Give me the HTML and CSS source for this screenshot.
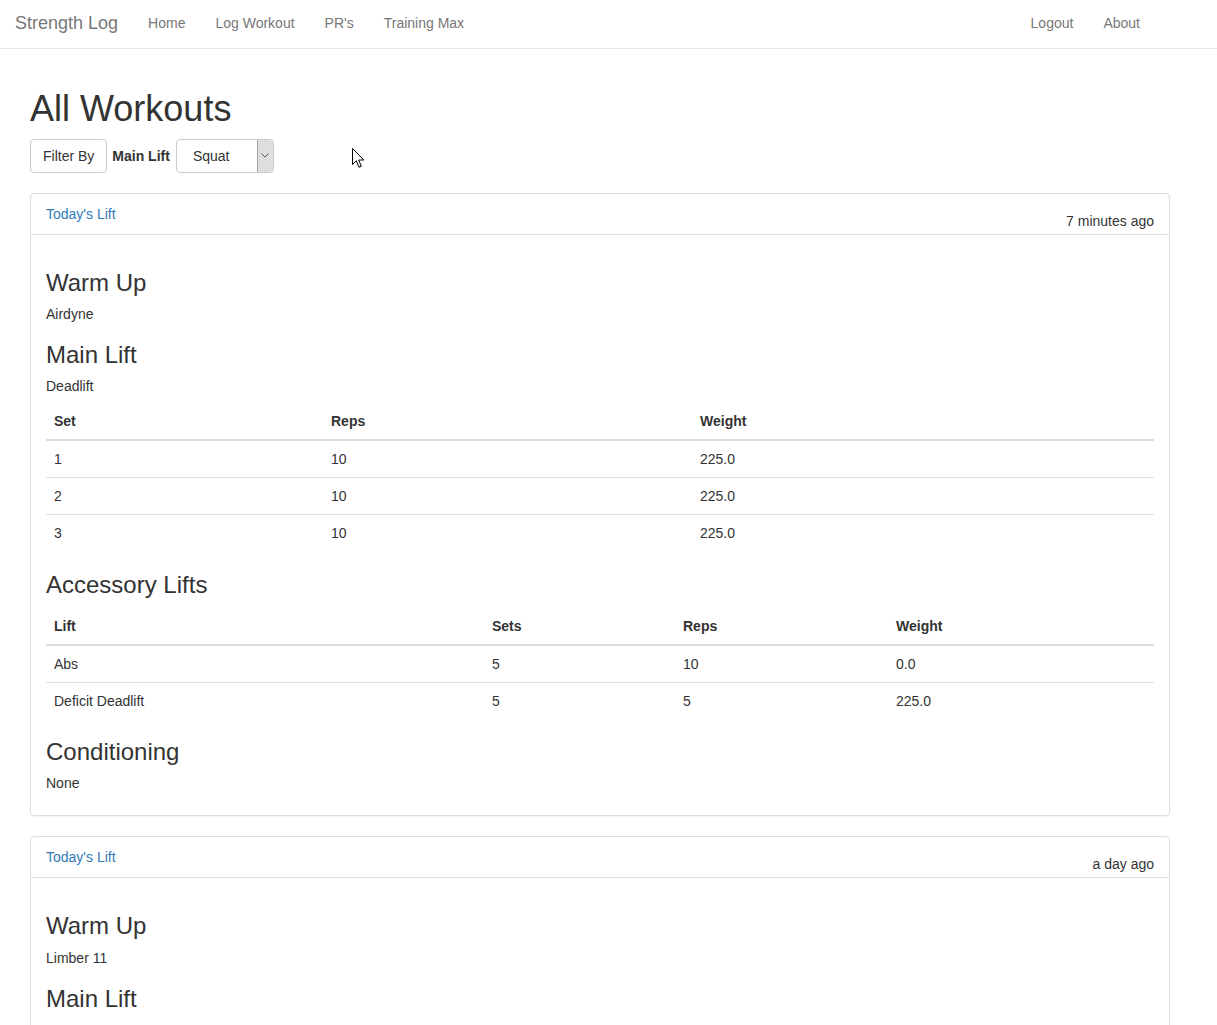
FILE: index.html
```html
<!DOCTYPE html>
<html lang="en">
<head>
<meta charset="utf-8">
<title>Strength Log</title>
<link rel="stylesheet" href="styles.css">
</head>
<body>
<nav class="navbar">
  <div class="navbar-inner">
    <a class="brand" href="#">Strength Log</a>
    <ul class="nav">
      <li><a href="#">Home</a></li>
      <li><a href="#">Log Workout</a></li>
      <li><a href="#">PR's</a></li>
      <li><a href="#">Training Max</a></li>
    </ul>
    <ul class="nav nav-right">
      <li><a href="#">Logout</a></li>
      <li><a href="#">About</a></li>
    </ul>
  </div>
</nav>

<main class="container">
  <h1 class="page-title">All Workouts</h1>
  <div class="filter-row">
    <button class="btn" type="button">Filter By</button>
    <span class="filter-label">Main Lift</span>
    <div class="select">
      <span class="select-value">Squat</span>
      <span class="select-arrow">
        <svg width="8" height="5" viewBox="0 0 8 5"><path d="M0.5 0.5 L4 4 L7.5 0.5" fill="none" stroke="#555" stroke-width="1"/></svg>
      </span>
    </div>
  </div>

  <section class="panel">
    <div class="panel-heading">
      <span class="panel-title"><a href="#">Today's Lift</a></span>
      <span class="panel-time">7 minutes ago</span>
    </div>
    <div class="panel-body">
      <h3 class="section-title">Warm Up</h3>
      <p class="section-text">Airdyne</p>
      <h3 class="section-title">Main Lift</h3>
      <p class="section-text">Deadlift</p>
      <table class="table table-sets">
        <colgroup><col class="w277"><col class="w369"><col></colgroup>
        <thead><tr><th>Set</th><th>Reps</th><th>Weight</th></tr></thead>
        <tbody>
          <tr><td>1</td><td>10</td><td>225.0</td></tr>
          <tr><td>2</td><td>10</td><td>225.0</td></tr>
          <tr><td>3</td><td>10</td><td>225.0</td></tr>
        </tbody>
      </table>
      <h3 class="section-title">Accessory Lifts</h3>
      <table class="table table-spaced">
        <colgroup><col class="w438"><col class="w191"><col class="w213"><col></colgroup>
        <thead><tr><th>Lift</th><th>Sets</th><th>Reps</th><th>Weight</th></tr></thead>
        <tbody>
          <tr><td>Abs</td><td>5</td><td>10</td><td>0.0</td></tr>
          <tr><td>Deficit Deadlift</td><td>5</td><td>5</td><td>225.0</td></tr>
        </tbody>
      </table>
      <h3 class="section-title">Conditioning</h3>
      <p class="section-text">None</p>
    </div>
  </section>

  <section class="panel">
    <div class="panel-heading">
      <span class="panel-title"><a href="#">Today's Lift</a></span>
      <span class="panel-time">a day ago</span>
    </div>
    <div class="panel-body">
      <h3 class="section-title">Warm Up</h3>
      <p class="section-text">Limber 11</p>
      <h3 class="section-title">Main Lift</h3>
      <p class="section-text">Squat</p>
      <table class="table table-sets">
        <colgroup><col class="w277"><col class="w369"><col></colgroup>
        <thead><tr><th>Set</th><th>Reps</th><th>Weight</th></tr></thead>
        <tbody>
          <tr><td>1</td><td>5</td><td>275.0</td></tr>
          <tr><td>2</td><td>5</td><td>275.0</td></tr>
          <tr><td>3</td><td>5</td><td>275.0</td></tr>
        </tbody>
      </table>
      <h3 class="section-title">Conditioning</h3>
      <p class="section-text">None</p>
    </div>
  </section>
</main>

<svg class="cursor" width="13" height="21" viewBox="0 0 13 21">
  <path d="M0.5 0.5 L0.5 16.5 L4.3 12.8 L7 19.3 L9.3 18.3 L6.7 12 L11.8 12 Z" fill="#fff" stroke="#000" stroke-width="1" stroke-linejoin="miter"/>
</svg>
</body>
</html>
```

FILE: styles.css
```css
* { box-sizing: border-box; }

body {
  margin: 0;
  font-family: "Liberation Sans", Arial, Helvetica, sans-serif;
  font-size: 14px;
  line-height: 20px;
  color: #333;
  background: #fff;
}

a { text-decoration: none; }

/* Navbar */
.navbar {
  background: #fff;
  border-bottom: 1px solid #e7e7e7;
  margin-bottom: 20px;
}
.navbar-inner {
  display: flex;
  align-items: flex-start;
  height: 48px;
  padding-right: 62px;
}
.brand {
  display: block;
  padding: 13px 15px 15px;
  font-size: 18px;
  line-height: 20px;
  color: #777;
}
.nav {
  display: flex;
  list-style: none;
  margin: 0;
  padding: 0;
}
.nav a {
  display: block;
  padding: 13px 15px 15px;
  color: #777;
}
.nav-right { margin-left: auto; }

/* Content */
.container {
  display: flow-root;
  width: 1140px;
  margin-left: 30px;
}
.page-title {
  font-size: 36px;
  line-height: 39.6px;
  font-weight: 500;
  margin: 20px 0 10px;
}

.filter-row {
  display: flex;
  align-items: center;
  gap: 5px;
  height: 34px;
  margin-bottom: 20px;
}
.btn {
  height: 34px;
  padding: 6px 12px;
  border: 1px solid #ccc;
  border-radius: 4px;
  background: #fff;
  color: #333;
  font: inherit;
  line-height: 20px;
}
.filter-label {
  font-weight: bold;
  padding-right: 1px;
}
.select {
  display: flex;
  width: 98px;
  height: 34px;
  border: 1px solid #ccc;
  border-radius: 4px;
  background: #fff;
}
.select-value {
  flex: 1;
  padding-left: 16px;
  line-height: 32px;
}
.select-arrow {
  width: 16px;
  display: flex;
  align-items: center;
  justify-content: center;
  background: #dedede;
  border-left: 1px solid #a6a6a6;
  border-radius: 0 3px 3px 0;
}

/* Panels */
.panel {
  border: 1px solid #ddd;
  border-radius: 4px;
  background: #fff;
  margin-bottom: 20px;
  box-shadow: 0 1px 1px rgba(0, 0, 0, 0.05);
}
.panel-heading {
  display: flex;
  justify-content: space-between;
  align-items: flex-start;
  padding: 10px 15px 3px;
  border-bottom: 1px solid #ddd;
}
.panel-title a { color: #337ab7; }
.panel-time { margin-top: 7px; }
.panel-body { padding: 15px 15px 14px; }

.section-title {
  font-size: 24px;
  line-height: 26.4px;
  font-weight: 500;
  margin: 18px 0 8px;
}
.section-title:first-child { margin-top: 20px; }
.section-text { margin: 0 0 8px; }

/* Tables */
.table {
  width: 100%;
  border-collapse: collapse;
  border-spacing: 0;
  table-layout: fixed;
  margin: 0 0 20px;
}
.table-sets { margin-top: -1px; margin-bottom: 21px; }
.table-spaced { margin-top: 9px; margin-bottom: 20px; }
.table th,
.table td {
  padding: 8px;
  text-align: left;
  vertical-align: top;
  line-height: 20px;
}
.table th {
  font-weight: bold;
  border-bottom: 2px solid #ddd;
}
.table td { border-top: 1px solid #ddd; }

.w277 { width: 277px; }
.w369 { width: 369px; }
.w438 { width: 438px; }
.w191 { width: 191px; }
.w213 { width: 213px; }

/* Mouse pointer overlay */
.cursor {
  position: absolute;
  left: 352px;
  top: 148px;
}
```
